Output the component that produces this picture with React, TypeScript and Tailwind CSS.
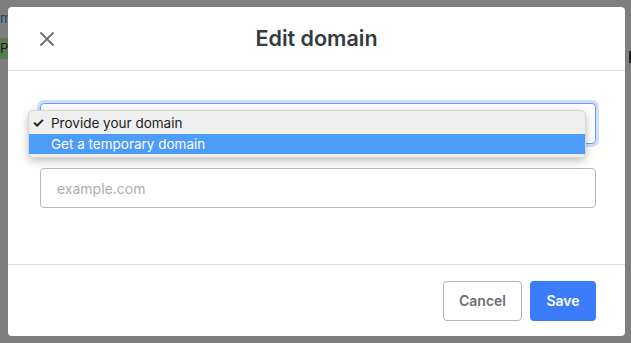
import { useState } from 'react'

const font = { fontFamily: 'Inter, "Noto Sans", sans-serif' }

export default function App() {
  const [domain, setDomain] = useState('')

  return (
    <div className="relative w-[631px] h-[343px] overflow-hidden bg-[#7f7f7f]" style={font}>
      {/* page behind the overlay */}
      <div className="absolute left-0 top-[9px] text-[13px] text-[#1c3f7a]">m</div>
      <div className="absolute left-0 top-[38px] w-[8px] h-[21px] bg-[#5b7a55] text-[13px] leading-[21px] text-[#1a1a1a]">
        Pu
      </div>
      <div className="absolute right-0 top-[51px] w-[2px] h-[12px] bg-[#1e1e1e]" />

      {/* modal */}
      <div className="absolute left-[8px] top-[7px] w-[617px] h-[329px] bg-white rounded-[4px] flex flex-col">
        <div className="relative h-[64px] flex items-center justify-center border-b border-[#dcdcdc]">
          <button className="absolute left-[30px] top-[23px] w-[18px] h-[18px] text-[#6b6f73]">
            <svg viewBox="0 0 18 18" className="w-[18px] h-[18px]" fill="none" stroke="currentColor" strokeWidth="1.8" strokeLinecap="round">
              <path d="M3 3 L15 15 M15 3 L3 15" />
            </svg>
          </button>
          <h2 className="text-[21.5px] font-semibold text-[#343a40]">Edit domain</h2>
        </div>

        <div className="relative pl-[32px] pr-[29px] pt-[32px] pb-[56px] border-b border-[#dcdcdc]">
          <div className="h-[41px] rounded-[4px] border border-[#6c9cf5] ring-[3px] ring-[#cfdefc] bg-white" />
          <input
            value={domain}
            onChange={(e) => setDomain(e.target.value)}
            placeholder="example.com"
            className="mt-[24px] w-full h-[40px] rounded-[4px] border border-[#b8b8b8] px-[16px] text-[14px] text-[#333] placeholder:text-[#adadad] outline-none"
          />

          {/* open native-style dropdown */}
          <div className="absolute left-[20px] top-[39px] w-[558px] rounded-[5px] bg-[#efefef] border border-[#d6d6d6] shadow-[0_3px_8px_rgba(0,0,0,0.25)] pt-[1px] pb-[3px] text-[13.5px] leading-[21px]">
            <div className="flex items-center h-[22px] text-[#222]">
              <span className="w-[22px] pl-[3px] text-[14px] font-bold leading-none">✓</span>
              <span>Provide your domain</span>
            </div>
            <div className="flex items-center h-[20px] bg-[#4d9bfb] text-white">
              <span className="w-[22px]" />
              <span>Get a temporary domain</span>
            </div>
          </div>
        </div>

        <div className="flex-1 flex items-center justify-end gap-[8px] px-[29px]">
          <button className="w-[79px] h-[40px] rounded-[4px] border border-[#b5b5b5] text-[14px] font-semibold text-[#6c7075] bg-white">
            Cancel
          </button>
          <button className="w-[66px] h-[40px] rounded-[4px] bg-[#3b7cfb] text-[14px] font-semibold text-white">
            Save
          </button>
        </div>
      </div>
    </div>
  )
}
